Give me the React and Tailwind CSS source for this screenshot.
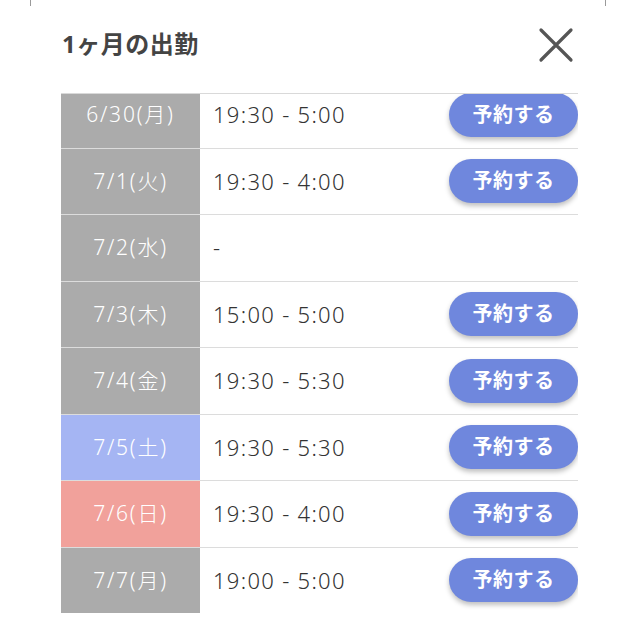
import React from "react";

const rows = [
  { d: "6/30(月)", t: "19:30 - 5:00", bg: "bg-[#ababab]", btn: true },
  { d: "7/1(火)", t: "19:30 - 4:00", bg: "bg-[#ababab]", btn: true },
  { d: "7/2(水)", t: "-", bg: "bg-[#ababab]", btn: false },
  { d: "7/3(木)", t: "15:00 - 5:00", bg: "bg-[#ababab]", btn: true },
  { d: "7/4(金)", t: "19:30 - 5:30", bg: "bg-[#ababab]", btn: true },
  { d: "7/5(土)", t: "19:30 - 5:30", bg: "bg-[#a5b5f3]", btn: true },
  { d: "7/6(日)", t: "19:30 - 4:00", bg: "bg-[#f1a19b]", btn: true },
  { d: "7/7(月)", t: "19:00 - 5:00", bg: "bg-[#ababab]", btn: true },
];

export default function App() {
  return (
    <div
      className="w-[640px] h-[640px] bg-white overflow-hidden flex flex-col"
      style={{ fontFamily: "'Noto Sans', 'Noto Sans CJK JP', sans-serif" }}
    >
      <div className="h-[6px] flex justify-between pl-[30px] pr-[34px]">
        <div className="w-[1px] h-full bg-[#9a9a9a]" />
        <div className="w-[1px] h-full bg-[#9a9a9a]" />
      </div>
      <div className="flex items-center justify-between pl-[62px] pr-[66px] h-[87px] pb-[12px]">
        <div className="text-[24px] font-bold text-[#444] tracking-[0.5px]">1ヶ月の出勤</div>
        <svg width="36" height="36" viewBox="0 0 36 36" className="mt-[2px]">
          <path d="M3 3 L33 33 M33 3 L3 33" stroke="#555" strokeWidth="3.2" strokeLinecap="round" />
        </svg>
      </div>
      <div className="ml-[61px] w-[517px] h-[520px] border-t border-[#d9d9d9] overflow-hidden">
        <div className="-mt-[12px]">
          {rows.map((r, i) => (
            <div key={i} className="flex h-[66.5px] border-b border-[#dcdcdc]">
              <div className={`w-[139px] flex items-center justify-center text-white text-[21px] font-light tracking-[1.8px] ${r.bg}`}>
                {r.d}
              </div>
              <div className="flex-1 flex items-center justify-between pl-[13px]">
                <span className="text-[22px] text-[#333] font-light tracking-[1.3px]">{r.t}</span>
                {r.btn && (
                  <button className="w-[129px] h-[44px] rounded-full bg-[#6f87dd] text-white text-[20px] font-bold tracking-[0.5px] shadow-[0_3px_5px_rgba(0,0,0,0.25)] flex items-center justify-center">
                    予約する
                  </button>
                )}
              </div>
            </div>
          ))}
        </div>
      </div>
    </div>
  );
}
